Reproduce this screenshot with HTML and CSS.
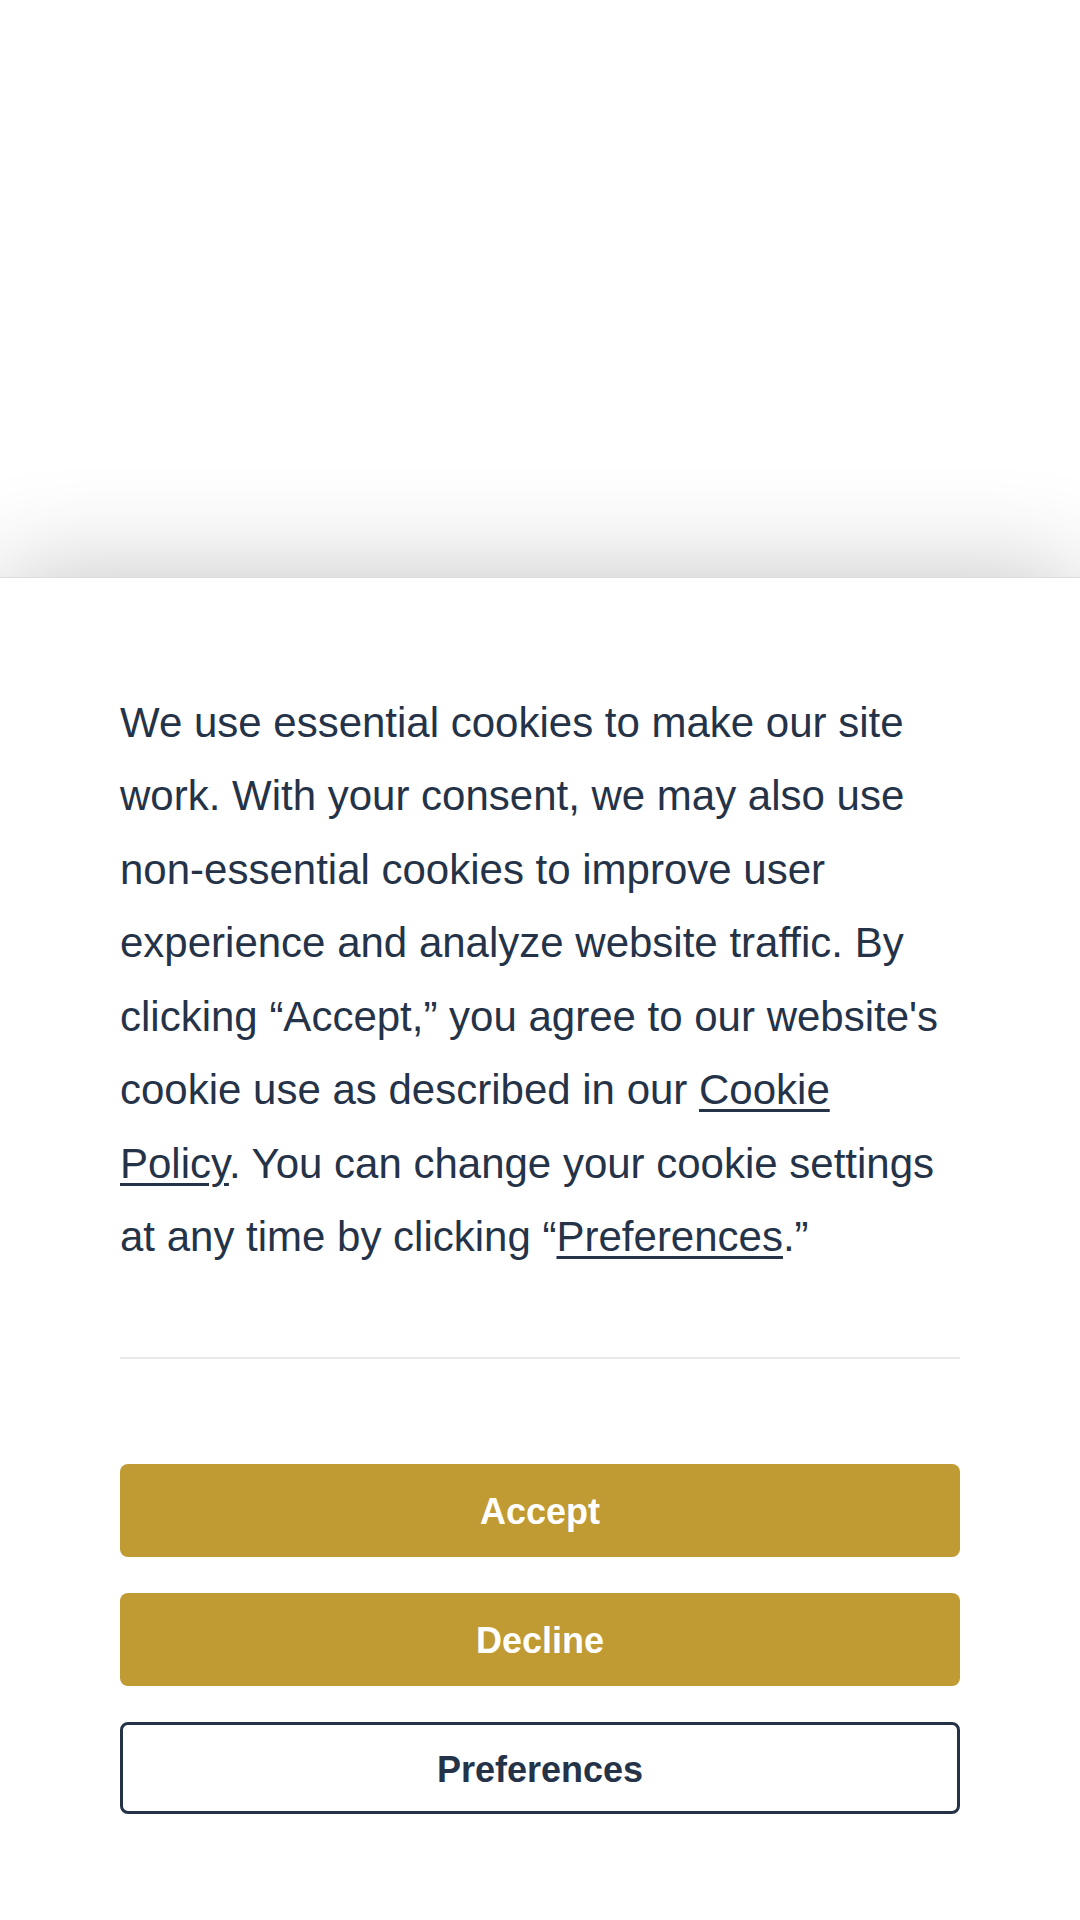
FILE: index.html
```html
<!DOCTYPE html>
<html lang="en">
<head>
<meta charset="utf-8">
<title>Cookie consent</title>
<link rel="stylesheet" href="styles.css">
</head>
<body>
<div class="page">
  <div class="backdrop"></div>
  <section class="banner">
    <p class="message">We use essential cookies to make our site work. With your consent, we may also use non-essential cookies to improve user experience and analyze website traffic. By clicking “Accept,” you agree to our website's cookie use as described in our <a href="#" class="link">Cookie Policy</a>. You can change your cookie settings at any time by clicking “<a href="#" class="link">Preferences</a>.”</p>
    <div class="divider"></div>
    <div class="actions">
      <button class="btn btn-primary">Accept</button>
      <button class="btn btn-primary">Decline</button>
      <button class="btn btn-outline">Preferences</button>
    </div>
  </section>
</div>
</body>
</html>
```

FILE: styles.css
```css
html, body {
  margin: 0;
  padding: 0;
  background: #ffffff;
}
.page {
  width: 1080px;
  height: 1920px;
  display: flex;
  flex-direction: column;
  overflow: hidden;
  font-family: "Liberation Sans", Arial, sans-serif;
}
.backdrop {
  height: 577px;
  flex: none;
  background: #ffffff;
}
.banner {
  flex: 1;
  background: #ffffff;
  box-shadow: 0 0 100px rgba(0, 0, 0, 0.24);
  border-top: 1px solid #dcdcdc;
  padding: 107.5px 120px 0;
  display: flex;
  flex-direction: column;
  position: relative;
}
.message {
  margin: 0;
  font-size: 42px;
  line-height: 73.5px;
  color: #253349;
}
.link {
  color: #253349;
  text-decoration: underline;
  text-decoration-thickness: 3px;
  text-underline-offset: 5px;
}
.divider {
  margin-top: 83.5px;
  height: 2px;
  background: #e8e8e8;
}
.actions {
  margin-top: 105px;
  display: flex;
  flex-direction: column;
  gap: 36px;
}
.btn {
  height: 93px;
  border-radius: 8px;
  font-family: "Liberation Sans", Arial, sans-serif;
  font-weight: bold;
  font-size: 36px;
  display: flex;
  align-items: center;
  justify-content: center;
  padding: 2px 0 0;
  cursor: pointer;
}
.btn-primary {
  background: #c09a32;
  color: #ffffff;
  border: none;
}
.btn-outline {
  background: #ffffff;
  color: #253349;
  border: 3px solid #253349;
  height: 92px;
  padding-top: 4px;
}
```
